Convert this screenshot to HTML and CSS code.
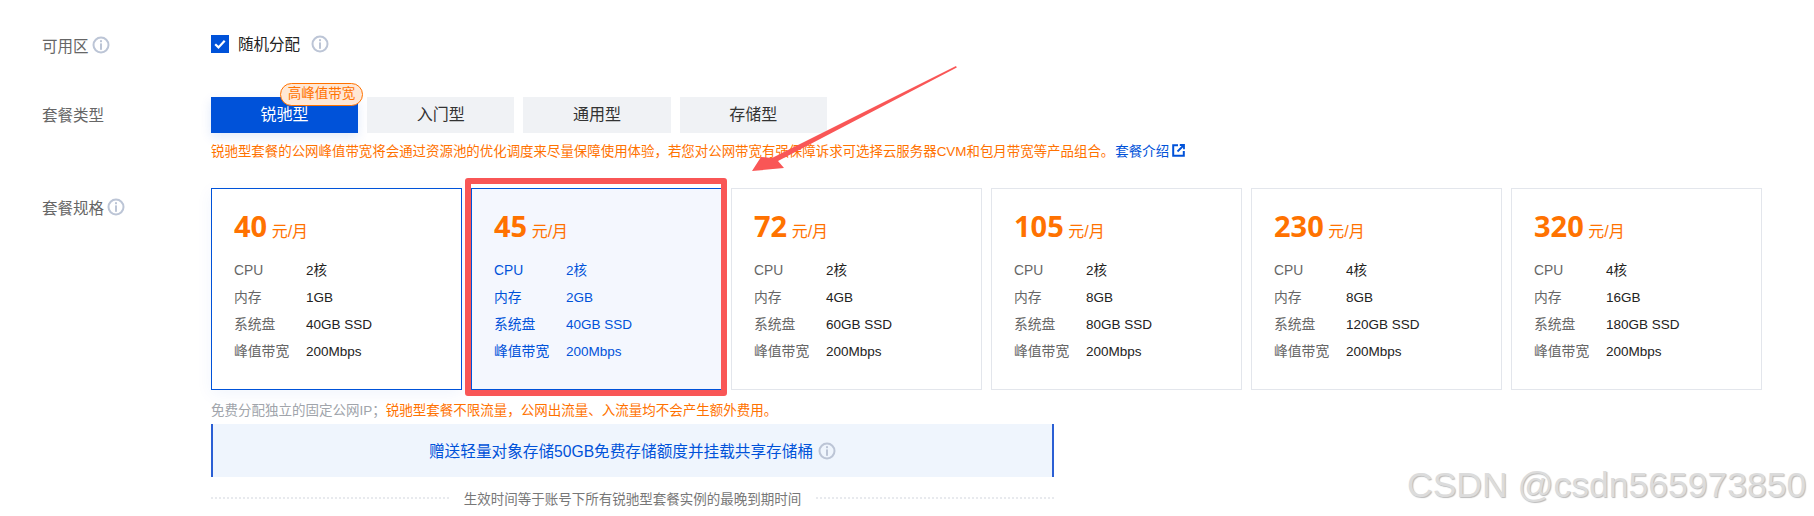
FILE: index.html
```html
<!DOCTYPE html>
<html lang="zh-CN">
<head>
    <meta charset="UTF-8">
    <meta name="viewport" content="width=device-width, initial-scale=1.0">
    <title>套餐规格</title>
    <link rel="stylesheet" href="styles.css">
</head>
<body>
    <svg class="defs" width="0" height="0">
        <symbol id="info" viewBox="0 0 18 18">
            <circle cx="9" cy="9" r="7.5" fill="none" stroke="currentColor" stroke-width="2"/>
            <rect x="8" y="4.2" width="2" height="2" fill="currentColor"/>
            <rect x="8" y="7.4" width="2" height="6.4" fill="currentColor"/>
        </symbol>
    </svg>

    <div class="form">
        <div class="row row-zone">
            <div class="row-label">可用区<svg class="info"><use href="#info"/></svg></div>
            <div class="zone">
                <span class="checkbox">
                    <svg width="18" height="18" viewBox="0 0 18 18"><path d="M4.2 9.2l3.3 3.2 6.2-6.6" fill="none" stroke="#fff" stroke-width="2.2"/></svg>
                </span>
                <span class="zone-text">随机分配</span>
                <svg class="info zone-info"><use href="#info"/></svg>
            </div>
        </div>

        <div class="row row-type">
            <div class="row-label">套餐类型</div>
            <div class="row-body">
                <div class="tabs">
                    <div class="tab active">锐驰型<span class="badge">高峰值带宽</span></div>
                    <div class="tab">入门型</div>
                    <div class="tab">通用型</div>
                    <div class="tab">存储型</div>
                </div>
                <p class="warn">锐驰型套餐的公网峰值带宽将会通过资源池的优化调度来尽量保障使用体验，若您对公网带宽有强保障诉求可选择云服务器CVM和包月带宽等产品组合。<a class="link">套餐介绍<svg class="ext" width="13" height="13" viewBox="0 0 13 13"><path d="M6 1.2H1.2v10.6h10.6V7" fill="none" stroke="#0052d9" stroke-width="2"/><path d="M5.5 7.5L11 2M7.8 1h4.2v4.2" fill="none" stroke="#0052d9" stroke-width="1.8"/></svg></a></p>
            </div>
        </div>

        <div class="row row-spec">
            <div class="row-label">套餐规格<svg class="info"><use href="#info"/></svg></div>
            <div class="row-body">
                <div class="cards">
                    <div class="card hover">
                        <div class="price"><b>40</b> 元/月</div>
                        <dl><dt>CPU</dt><dd>2核</dd><dt>内存</dt><dd>1GB</dd><dt>系统盘</dt><dd>40GB SSD</dd><dt>峰值带宽</dt><dd>200Mbps</dd></dl>
                    </div>
                    <div class="card selected">
                        <div class="price"><b>45</b> 元/月</div>
                        <dl><dt>CPU</dt><dd>2核</dd><dt>内存</dt><dd>2GB</dd><dt>系统盘</dt><dd>40GB SSD</dd><dt>峰值带宽</dt><dd>200Mbps</dd></dl>
                    </div>
                    <div class="card">
                        <div class="price"><b>72</b> 元/月</div>
                        <dl><dt>CPU</dt><dd>2核</dd><dt>内存</dt><dd>4GB</dd><dt>系统盘</dt><dd>60GB SSD</dd><dt>峰值带宽</dt><dd>200Mbps</dd></dl>
                    </div>
                    <div class="card">
                        <div class="price"><b>105</b> 元/月</div>
                        <dl><dt>CPU</dt><dd>2核</dd><dt>内存</dt><dd>8GB</dd><dt>系统盘</dt><dd>80GB SSD</dd><dt>峰值带宽</dt><dd>200Mbps</dd></dl>
                    </div>
                    <div class="card">
                        <div class="price"><b>230</b> 元/月</div>
                        <dl><dt>CPU</dt><dd>4核</dd><dt>内存</dt><dd>8GB</dd><dt>系统盘</dt><dd>120GB SSD</dd><dt>峰值带宽</dt><dd>200Mbps</dd></dl>
                    </div>
                    <div class="card">
                        <div class="price"><b>320</b> 元/月</div>
                        <dl><dt>CPU</dt><dd>4核</dd><dt>内存</dt><dd>16GB</dd><dt>系统盘</dt><dd>180GB SSD</dd><dt>峰值带宽</dt><dd>200Mbps</dd></dl>
                    </div>
                </div>
                <p class="tip">免费分配独立的固定公网IP；<span class="tip-warn">锐驰型套餐不限流量，公网出流量、入流量均不会产生额外费用。</span></p>
                <div class="gift">赠送轻量对象存储50GB免费存储额度并挂载共享存储桶<svg class="info gift-info"><use href="#info"/></svg></div>
                <div class="expire"><span>生效时间等于账号下所有锐驰型套餐实例的最晚到期时间</span></div>
            </div>
        </div>
    </div>

    <!-- 截图上的标注 -->
    <div class="mark-box"></div>
    <svg class="mark-arrow" width="240" height="130" viewBox="0 0 240 130">
        <path d="M222 4L222.8 5.5L44 99L50 106L18 109L27 95L38 96z" fill="#f95656"/>
    </svg>
    <div class="watermark">CSDN @csdn565973850</div>
</body>
</html>
```

FILE: styles.css
```css
* {
    box-sizing: border-box;
}
html, body {
    height: 516px;
}
body {
    margin: 0;
    position: relative;
    overflow: hidden;
    background: #fff;
    color: #222;
    font-family: "Liberation Sans", "Noto Sans CJK SC", sans-serif;
    font-size: 14px;
}
.defs {
    position: absolute;
}
.form {
    padding: 35px 0 0 42px;
}
.row {
    display: flex;
}
.row-label {
    flex: 0 0 169px;
    display: flex;
    align-items: center;
    height: 20px;
    color: #666;
    font-size: 15.5px;
}
.row-body {
    flex: none;
}
.info {
    width: 18px;
    height: 18px;
    color: #bcc5d6;
    flex: none;
}
.row-label .info {
    margin-left: 3px;
}

.zone {
    display: flex;
    align-items: center;
    height: 18px;
}
.checkbox {
    width: 18px;
    height: 18px;
    background: #0052d9;
    display: block;
}
.checkbox svg {
    display: block;
}
.zone-text {
    margin: -2px 0 0 9px;
    font-size: 15.5px;
    color: #222;
}
.zone-info {
    margin-left: 11px;
}

.row-type {
    margin-top: 42px;
}
.row-type .row-label {
    height: 34px;
}
.tabs {
    display: flex;
    gap: 9px;
}
.tab {
    position: relative;
    width: 147.2px;
    height: 36px;
    line-height: 35px;
    text-align: center;
    background: #f0f2f5;
    color: #333;
    font-size: 16px;
}
.tab.active {
    background: #0052d9;
    color: #fff;
    box-shadow: 0 4px 12px rgba(0, 82, 217, 0.12);
}
.badge {
    position: absolute;
    left: 69px;
    top: -14px;
    width: 83px;
    height: 23px;
    line-height: 20px;
    border: 1px solid #ff7200;
    border-radius: 12px;
    background: #ffe8d6;
    color: #ff7200;
    font-size: 13.5px;
}
.warn {
    margin: 9px 0 0;
    height: 19px;
    line-height: 19px;
    color: #ff7200;
    font-size: 13.45px;
    white-space: nowrap;
}
.link {
    color: #0052d9;
    margin-left: 1px;
}
.ext {
    margin-left: 3px;
    vertical-align: -1px;
}

.row-spec {
    margin-top: 27px;
}
.row-spec .row-label {
    height: 38px;
}
.cards {
    display: flex;
    gap: 9px;
}
.card {
    width: 251px;
    height: 202px;
    padding: 21px 22px 0;
    border: 1px solid #e3e6ec;
}
.card.hover {
    border-color: #0052d9;
    box-shadow: 0 4px 16px rgba(0, 82, 217, 0.06);
}
.card.selected {
    border-color: #0052d9;
    background: #f4f7fe;
}
.price {
    height: 32px;
    line-height: 32px;
    color: #ff7200;
    font-size: 16px;
}
.price b {
    font-family: "Noto Sans", sans-serif;
    font-size: 29px;
    font-weight: 700;
}
dl {
    display: grid;
    grid-template-columns: 72px 1fr;
    grid-auto-rows: 27px;
    margin: 15px 0 0;
    line-height: 27px;
    font-size: 13.8px;
}
dt {
    color: #666;
}
dd {
    margin: 0;
    color: #222;
    font-size: 13.5px;
}
.selected dt, .selected dd {
    color: #0052d9;
}

.tip {
    margin: 11px 0 0;
    height: 19px;
    line-height: 19px;
    color: #a0a4ab;
    font-size: 13.5px;
}
.tip-warn {
    color: #ff7200;
}
.gift {
    width: 843px;
    height: 53px;
    margin-top: 4px;
    display: flex;
    align-items: center;
    justify-content: center;
    background: #eff5fd;
    border-left: 2px solid #2b5fd4;
    border-right: 2px solid #2b5fd4;
    color: #0052d9;
    font-size: 15.65px;
}
.gift-info {
    margin-left: 5px;
}
.expire {
    width: 843px;
    margin-top: 11px;
    display: flex;
    align-items: center;
    color: #777;
    font-size: 13.5px;
}
.expire::before, .expire::after {
    content: "";
    flex: 1;
    border-top: 2px dotted #e8eaee;
}
.expire span {
    padding: 0 15px;
}

.mark-box {
    position: absolute;
    left: 465px;
    top: 178px;
    width: 262px;
    height: 218px;
    border: 6px solid #f95656;
    border-radius: 3px;
}
.mark-arrow {
    position: absolute;
    left: 734px;
    top: 62px;
}
.watermark {
    position: absolute;
    left: 1407px;
    top: 465px;
    color: #dcdcdc;
    font-size: 35.5px;
    line-height: 40px;
    white-space: nowrap;
    text-shadow: 1px 1px 1px #bbb;
}
```
